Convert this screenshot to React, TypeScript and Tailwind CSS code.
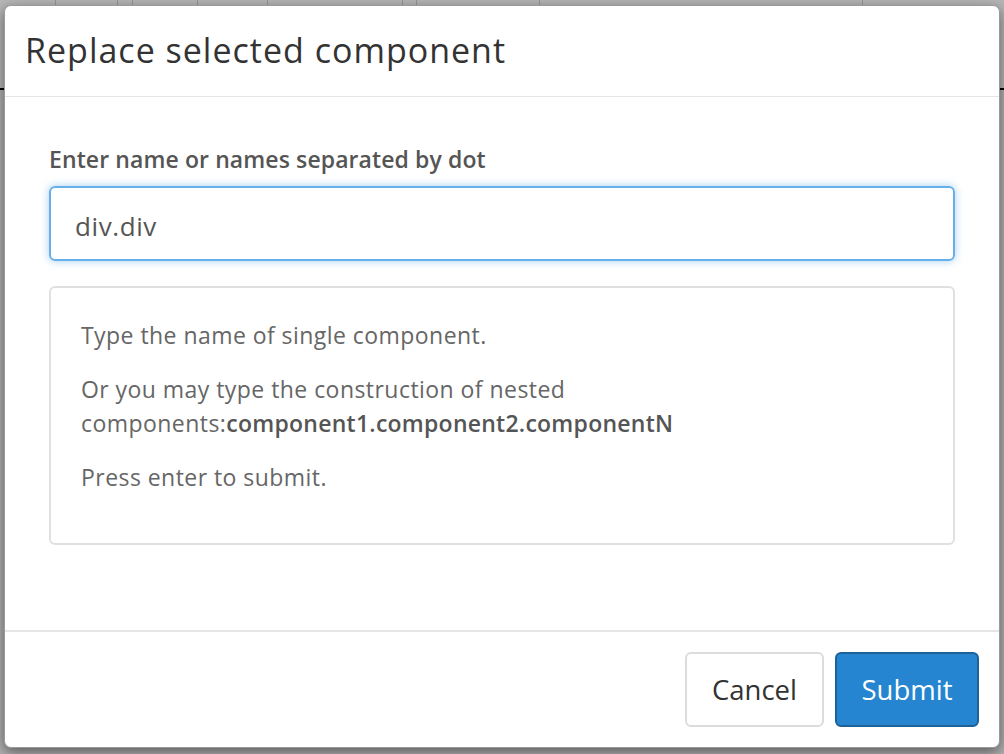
import React from "react";

export default function App() {
  const lines = [55, 117, 132, 197, 267, 402, 416, 539, 862];
  return (
    <div
      className="relative w-[1004px] h-[754px] overflow-hidden bg-[#ececec]"
      style={{ fontFamily: '"Open Sans", "Noto Sans", sans-serif' }}
    >
      {/* background page hint */}
      <div className="absolute inset-x-0 top-0 h-[90px] bg-[#f4f4f4] border-b-2 border-black">
        {lines.map((x) => (
          <div key={x} className="absolute top-0 h-[90px] w-px bg-[#c8c8c8]" style={{ left: x }} />
        ))}
      </div>
      <div className="absolute inset-0 bg-black/25" />

      {/* modal */}
      <div className="absolute left-[4px] top-[5px] w-[996px] h-[743px] bg-white rounded-[7px] border border-[#9a9a9a] shadow-[0_4px_14px_rgba(0,0,0,0.5)] flex flex-col">
        <div className="h-[91px] border-b border-[#e5e5e5] flex items-center pl-[20px] shrink-0">
          <h1 className="text-[34px] leading-none text-[#333] font-normal tracking-[1px] -mt-[2px]">
            Replace selected component
          </h1>
        </div>

        <div className="flex-1 px-[44px] pt-[47px]">
          <label className="block text-[23px] font-semibold text-[#555] leading-[30px] mb-[12px] tracking-[0.1px]">
            Enter name or names separated by dot
          </label>
          <div className="h-[75px] rounded-[6px] border-2 border-[#66afe9] shadow-[0_0_8px_rgba(102,175,233,0.6)] flex items-center px-[24px] pt-[5px] text-[26px] tracking-[0.6px] text-[#555]">
            div.div
          </div>

          <div className="mt-[25px] h-[259px] rounded-[6px] border-2 border-[#e0e0e0] pl-[30px] pt-[30px] text-[23px] leading-[34px] text-[#666]">
            <p className="mb-[20px] tracking-[0.45px]">Type the name of single component.</p>
            <p className="mb-[20px] tracking-[0.45px]">
              Or you may type the construction of nested
              <br />
              components:<b className="font-semibold text-[#555] tracking-[0.25px]">component1.component2.componentN</b>
            </p>
            <p className="tracking-[0.45px]">Press enter to submit.</p>
          </div>
        </div>

        <div className="h-[117px] border-t-2 border-[#e5e5e5] flex items-start justify-end gap-[11px] pr-[20px] pt-[20px] shrink-0">
          <button className="w-[139px] h-[75px] rounded-[6px] border-2 border-[#dcdcdc] bg-white text-[27.5px] text-[#333]">
            Cancel
          </button>
          <button className="w-[144px] h-[75px] rounded-[6px] border-2 border-[#1d6196] bg-[#2585d0] text-[27.5px] text-white">
            Submit
          </button>
        </div>
      </div>
    </div>
  );
}
